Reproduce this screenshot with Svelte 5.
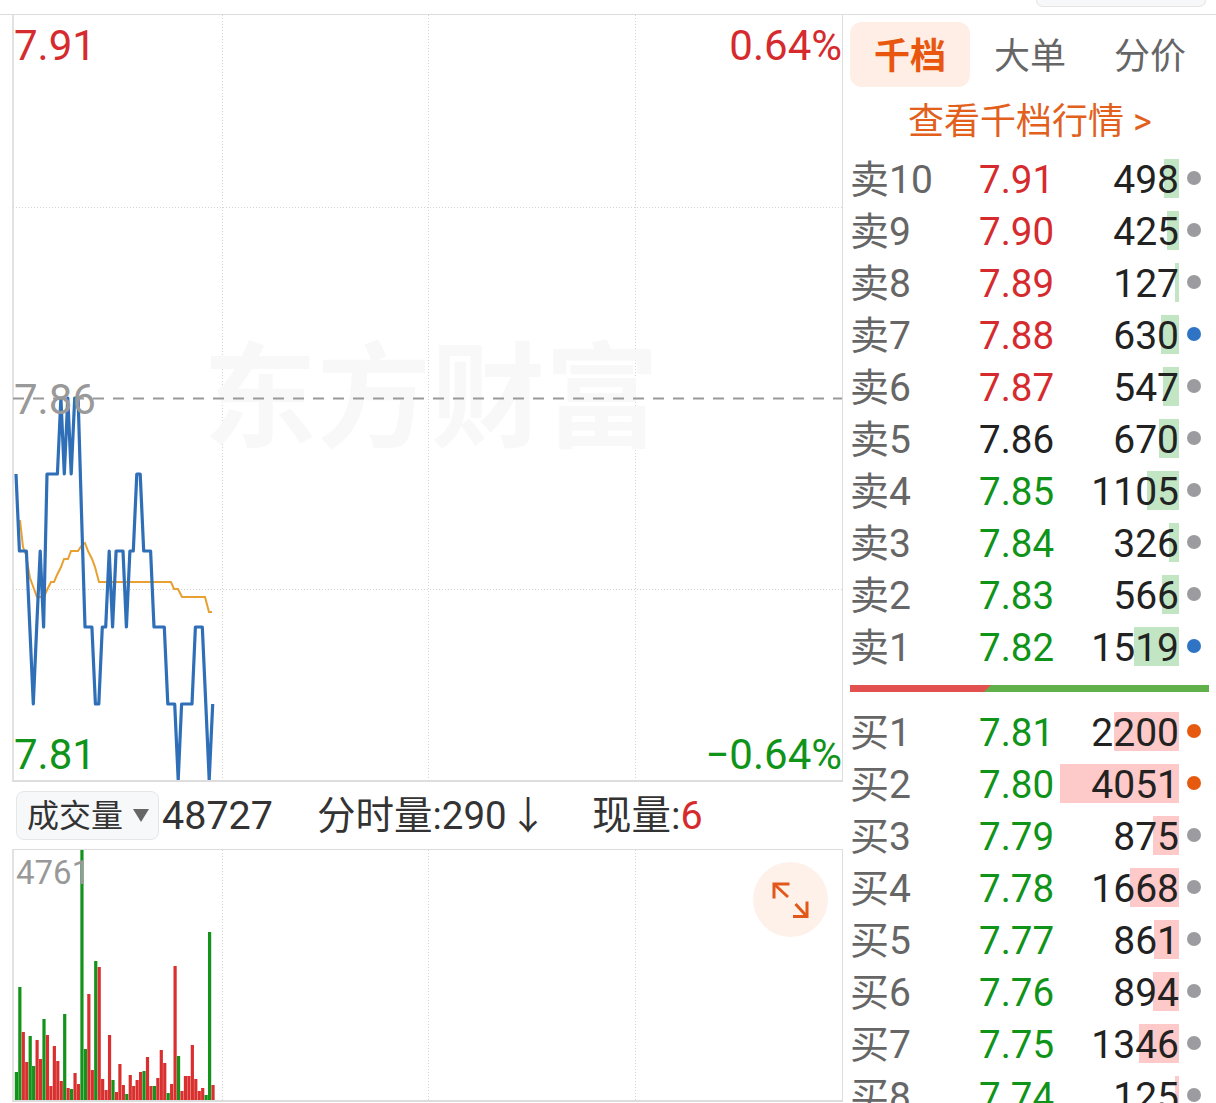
<script>
  const line = [474,551,551,551,627,704,627,551,627,474,474,474,474,398,474,398,474,398,398,513,627,627,627,704,704,627,627,551,627,551,551,551,627,551,551,474,474,551,551,551,627,627,627,627,704,704,704,780,704,704,704,704,627,627,627,704,780,704];
  const avg = [[20,520],[23,547],[26,555],[30,578],[37,597],[44,597],[47,590],[51,582],[54,582],[57,575],[61,567],[64,559],[68,559],[71,551],[75,551],[78,551],[82,545],[85,543],[88,551],[92,559],[95,567],[99,582],[171,582],[174,589],[178,589],[182,597],[205,597],[209,612],[212,612]];

  // volume bars: [top y, g|r]
  const vol = [[1072,"g"],[987,"g"],[1032,"r"],[1062,"r"],[1036,"g"],[1066,"g"],[1040,"r"],[1059,"r"],[1019,"g"],[1035,"r"],[1086,"r"],[1046,"r"],[1061,"r"],[1081,"r"],[1014,"g"],[1088,"r"],[1089,"g"],[1073,"r"],[1084,"r"],[850,"g"],[1049,"g"],[994,"r"],[1070,"r"],[961,"g"],[967,"r"],[1079,"r"],[1090,"r"],[1035,"r"],[1080,"g"],[1092,"r"],[1064,"r"],[1085,"r"],[1094,"g"],[1075,"r"],[1086,"r"],[1080,"r"],[1072,"r"],[1071,"g"],[1057,"r"],[1086,"r"],[1086,"g"],[1078,"r"],[1050,"r"],[1063,"r"],[1093,"g"],[1084,"r"],[966,"r"],[1056,"g"],[1091,"r"],[1076,"r"],[1076,"r"],[1045,"r"],[1079,"r"],[1091,"r"],[1088,"r"],[1095,"g"],[932,"g"],[1085,"r"]];

  const X0 = 16;
  const STEP = 3.45;
  const linePts = line.map((y, i) => `${(X0 + i * STEP).toFixed(1)},${y}`).join(" ");
  const avgPts = avg.map((p) => p.join(",")).join(" ");

  const RED = "#d52b2e";
  const GREEN = "#0f9318";
  const GREY = "#222";
  const MAX = 4051;
  const MAXW = 119;

  const asks = [
    ["卖10", "7.91", RED, 498, "grey"],
    ["卖9", "7.90", RED, 425, "grey"],
    ["卖8", "7.89", RED, 127, "grey"],
    ["卖7", "7.88", RED, 630, "blue"],
    ["卖6", "7.87", RED, 547, "grey"],
    ["卖5", "7.86", GREY, 670, "grey"],
    ["卖4", "7.85", GREEN, 1105, "grey"],
    ["卖3", "7.84", GREEN, 326, "grey"],
    ["卖2", "7.83", GREEN, 566, "grey"],
    ["卖1", "7.82", GREEN, 1519, "blue"]
  ];
  const bids = [
    ["买1", "7.81", GREEN, 2200, "orange"],
    ["买2", "7.80", GREEN, 4051, "orange"],
    ["买3", "7.79", GREEN, 875, "grey"],
    ["买4", "7.78", GREEN, 1668, "grey"],
    ["买5", "7.77", GREEN, 861, "grey"],
    ["买6", "7.76", GREEN, 894, "grey"],
    ["买7", "7.75", GREEN, 1346, "grey"],
    ["买8", "7.74", GREEN, 125, "grey"]
  ];
  const barWidth = (v) => (v / MAX) * MAXW;
</script>

{#snippet row(r, side)}
  <div class="row">
    <span class="name">{r[0]}</span>
    <span class="price" style="color:{r[2]}">{r[1]}</span>
    <span class="qty">
      <i class="bar {side}" style="width:{barWidth(r[3])}px"></i>
      <b>{r[3]}</b>
    </span>
    <i class="dot {r[4]}"></i>
  </div>
{/snippet}

<div class="page">
  <div class="topbar"><div class="topbtn"></div></div>
  <div class="main">
    <div class="left">
      <div class="chart">
        <svg class="plot" width="829" height="765" viewBox="13 15 829 765">
          <g class="grid">
            <line x1="222.5" y1="15" x2="222.5" y2="780" />
            <line x1="428.5" y1="15" x2="428.5" y2="780" />
            <line x1="635.5" y1="15" x2="635.5" y2="780" />
            <line x1="13" y1="207.5" x2="842" y2="207.5" />
            <line x1="13" y1="589.5" x2="842" y2="589.5" />
          </g>
          <text x="203" y="438" class="mark">东方财富</text>
          <line x1="13" y1="398.5" x2="842" y2="398.5" class="dash" />
          <polyline points={avgPts} class="avg" />
          <polyline points={linePts} class="price-line" />
        </svg>
        <span class="lb tl red">7.91</span>
        <span class="lb tr red">0.64%</span>
        <span class="lb ml">7.86</span>
        <span class="lb bl green">7.81</span>
        <span class="lb br green">−0.64%</span>
      </div>
      <div class="volhead">
        <div class="select">成交量<i class="caret"></i></div>
        <span class="total">48727</span>
        <span class="fs">分时量:290<em>↓</em></span>
        <span class="now">现量:<u>6</u></span>
      </div>
      <div class="volchart">
        <svg class="plot" width="829" height="250" viewBox="13 850 829 250">
          <g class="grid">
            <line x1="222.5" y1="850" x2="222.5" y2="1100" />
            <line x1="428.5" y1="850" x2="428.5" y2="1100" />
            <line x1="635.5" y1="850" x2="635.5" y2="1100" />
          </g>
          {#each vol as v, i}
            <rect x={X0 - 1.2 + i * STEP} y={v[0]} width="3.2" height={1100 - v[0]} fill={v[1] === "g" ? "#13931a" : "#d9302f"} />
          {/each}
        </svg>
        <span class="maxvol">4761</span>
        <button class="expand" aria-label="expand">
          <svg width="40" height="40" viewBox="0 0 40 40" fill="none" stroke="#e2581a" stroke-width="3">
            <path d="M3 18.5V4H18.5" />
            <path d="M3 4L17 17" />
            <path d="M36 21.5V36.5H22" />
            <path d="M36 36.5L24.5 24" />
          </svg>
        </button>
      </div>
    </div>
    <div class="right">
      <div class="tabs">
        <div class="tab active">千档</div>
        <div class="tab">大单</div>
        <div class="tab">分价</div>
      </div>
      <div class="more">查看千档行情 &gt;</div>
      <div class="rows">
        {#each asks as r}{@render row(r, "ask")}{/each}
      </div>
      <div class="ratio"><div class="red-part"></div><div class="green-part"></div></div>
      <div class="rows">
        {#each bids as r}{@render row(r, "bid")}{/each}
      </div>
    </div>
  </div>
</div>

<style>
  :global(body) {
    margin: 0;
    background: #fff;
    overflow: hidden;
  }

  .page {
    width: 1216px;
    height: 1103px;
    overflow: hidden;
    font-family: Roboto, "Noto Sans CJK SC", sans-serif;
    color: #333;
  }

  .topbar {
    height: 14px;
    border-bottom: 1px solid #ddd;
    display: flex;
    justify-content: flex-end;
    padding-right: 10px;
    overflow: hidden;
  }

  .topbtn {
    width: 168px;
    height: 6px;
    border: 1px solid #e4e4e4;
    border-top: 0;
    border-radius: 0 0 8px 8px;
    background: #f7f8fa;
  }

  .main {
    display: flex;
  }

  .left {
    width: 843px;
    box-sizing: border-box;
    padding-left: 12px;
    flex: none;
  }

  .chart {
    position: relative;
    height: 767px;
    box-sizing: border-box;
    border-left: 2px solid #e2e2e2;
    border-right: 1px solid #ddd;
    border-bottom: 2px solid #ddd;
  }

  .plot {
    display: block;
    margin-left: -1px;
    overflow: hidden;
  }

  .grid line {
    stroke: #d4d4d4;
    stroke-width: 1;
    stroke-dasharray: 1 2;
  }

  .mark {
    font-size: 114px;
    font-weight: 700;
    fill: #f8f8f8;
    font-family: "Noto Sans CJK SC", sans-serif;
  }

  .dash {
    stroke: #999;
    stroke-width: 1.8;
    stroke-dasharray: 11 9;
  }

  .avg {
    fill: none;
    stroke: #e8a030;
    stroke-width: 2;
  }

  .price-line {
    fill: none;
    stroke: #2f6fb8;
    stroke-width: 3.2;
    stroke-linejoin: round;
  }

  .lb {
    position: absolute;
    font-size: 42px;
    line-height: 48px;
    font-weight: 400;
    white-space: nowrap;
  }

  .red {
    color: #d52b2e;
  }

  .green {
    color: #0f9318;
  }

  .tl {
    left: 0;
    top: 7px;
  }

  .tr {
    right: 0;
    top: 7px;
  }

  .ml {
    left: 0;
    top: 361px;
    color: #999;
  }

  .bl {
    left: 0;
    bottom: 1px;
  }

  .br {
    right: 0;
    bottom: 1px;
  }

  .volhead {
    height: 67px;
    display: flex;
    align-items: center;
    box-sizing: border-box;
    padding-left: 4px;
    font-size: 39.5px;
    line-height: 48px;
    font-weight: 400;
    color: #333;
  }

  .select {
    width: 143px;
    height: 49px;
    flex: none;
    box-sizing: border-box;
    border: 1px solid #e6e6e6;
    border-radius: 8px;
    background: #f7f8fa;
    display: flex;
    align-items: center;
    padding-left: 10px;
    font-size: 32px;
    font-weight: 400;
    line-height: 1;
  }

  .caret {
    margin-left: 10px;
    border-left: 8px solid transparent;
    border-right: 8px solid transparent;
    border-top: 13px solid #666;
  }

  .total {
    margin-left: 3px;
    width: 155px;
  }

  .fs {
    width: 275px;
    font-size: 38.5px;
  }

  .fs em {
    font-style: normal;
    margin-left: 2px;
  }

  .now u {
    text-decoration: none;
    color: #d52b2e;
  }

  .volchart {
    position: relative;
    height: 253px;
    box-sizing: border-box;
    border-left: 2px solid #e2e2e2;
    border-right: 1px solid #ddd;
    border-top: 1px solid #ddd;
    border-bottom: 2px solid #ddd;
  }

  .maxvol {
    position: absolute;
    left: 2px;
    top: 3px;
    font-size: 33px;
    line-height: 40px;
    font-weight: 400;
    color: #999;
  }

  .expand {
    position: absolute;
    right: 14px;
    top: 12px;
    width: 75px;
    height: 75px;
    border: 0;
    padding: 0;
    border-radius: 50%;
    background: #fef1ea;
    display: flex;
    align-items: center;
    justify-content: center;
  }

  .right {
    flex: 1;
    box-sizing: border-box;
    padding: 7px 7px 0 7px;
  }

  .tabs {
    display: flex;
    height: 65px;
  }

  .tab {
    width: 120px;
    box-sizing: border-box;
    padding-bottom: 4px;
    display: flex;
    align-items: center;
    justify-content: center;
    font-size: 36px;
    color: #666;
    font-weight: 400;
  }

  .active {
    background: #feeee6;
    border-radius: 12px;
    color: #e9570f;
    font-weight: 700;
  }

  .more {
    height: 62px;
    margin-bottom: 3px;
    display: flex;
    align-items: center;
    justify-content: center;
    font-size: 36px;
    color: #e2601c;
  }

  .rows {
    display: flex;
    flex-direction: column;
  }

  .row {
    height: 52px;
    display: flex;
    align-items: center;
    font-size: 39px;
    line-height: 44px;
    font-weight: 400;
  }

  .name {
    width: 129px;
    padding-top: 4px;
    color: #666;
    font-size: 39px;
  }

  .price {
    width: 90px;
    padding-top: 3px;
    font-size: 38.5px;
  }

  .qty {
    position: relative;
    width: 110px;
    height: 39px;
    display: flex;
    justify-content: flex-end;
    align-items: center;
    color: #222;
  }

  .qty b {
    position: relative;
    padding-top: 3px;
    font-weight: 400;
  }

  .bar {
    position: absolute;
    right: 0;
    top: 0;
    bottom: 0;
  }

  .ask {
    background: #c2e6c4;
  }

  .bid {
    background: #fec9c9;
  }

  .dot {
    width: 14px;
    height: 14px;
    border-radius: 50%;
    margin-left: 8px;
  }

  .grey {
    background: #9c9ca0;
  }

  .blue {
    background: #2f74c4;
  }

  .orange {
    background: #e65a10;
  }

  .ratio {
    display: flex;
    height: 7px;
    margin: 13px 1px 13px 0;
    background: #e2504f;
  }

  .red-part {
    width: 134px;
  }

  .green-part {
    flex: 1;
    background: #60b04c;
    clip-path: polygon(7px 0, 100% 0, 100% 100%, 0 100%);
  }
</style>
